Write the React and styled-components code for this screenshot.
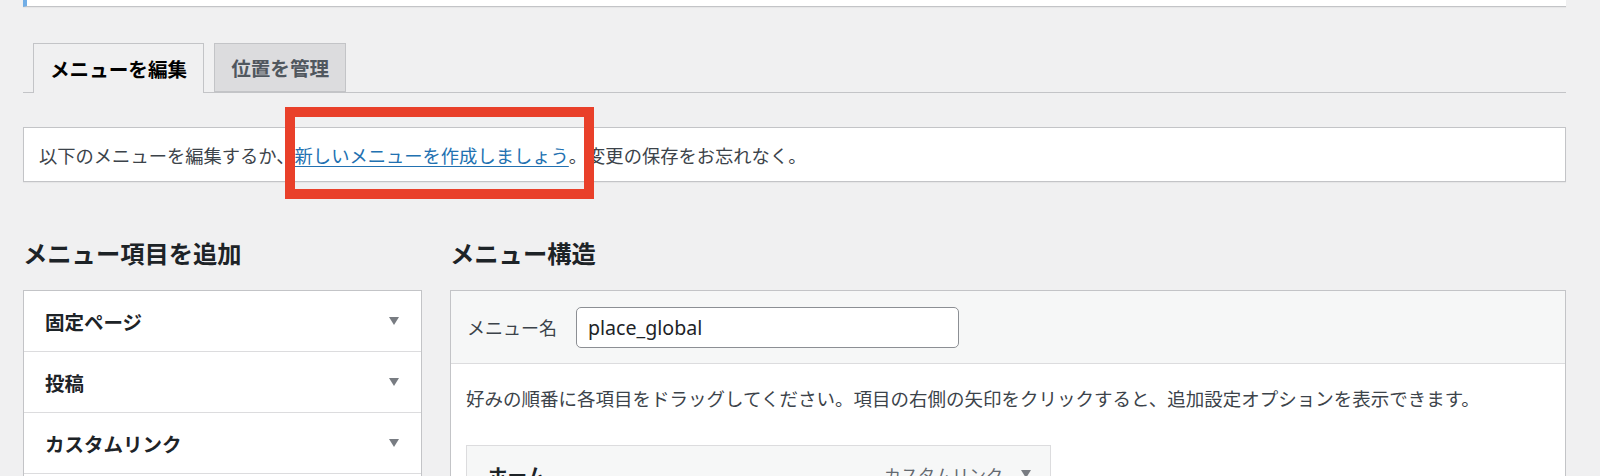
import React from 'react';
import styled, { createGlobalStyle } from 'styled-components';

const COLORS = {
  page: '#f0f0f1',
  border: '#c3c4c7',
  divider: '#dcdcde',
  text: '#1d2327',
  body: '#3c434a',
  muted: '#646970',
  link: '#2271b1',
  arrow: '#787c82',
  annotation: '#e9402a',
};

const FONT = `"Noto Sans", "Noto Sans CJK JP", sans-serif`;

const GlobalStyle = createGlobalStyle`
  html, body {
    margin: 0;
    height: 100%;
    overflow: hidden;
    background: ${COLORS.page};
  }
  body {
    font-family: ${FONT};
    color: ${COLORS.body};
  }
`;

const Wrap = styled.div`
  padding: 0 34px 0 23px;
`;

// tail end of a notice that is scrolled mostly off the top
const TopNotice = styled.div`
  height: 6px;
  background: #fff;
  border-left: 4px solid #72aee6;
  border-bottom: 1px solid ${COLORS.border};
  box-shadow: 0 1px 1px rgba(0, 0, 0, 0.04);
`;

const TabBar = styled.nav`
  display: flex;
  align-items: flex-end;
  gap: 10px;
  margin-top: 36px;
  padding-left: 10px;
  border-bottom: 1px solid ${COLORS.border};
`;

const Tab = styled.a`
  box-sizing: border-box;
  display: flex;
  align-items: center;
  height: ${p => (p.$active ? 50 : 49)}px;
  margin-bottom: ${p => (p.$active ? -1 : 0)}px;
  padding: 0 16px 1px;
  border: 1px solid ${COLORS.border};
  border-bottom: ${p => (p.$active ? 'none' : `1px solid ${COLORS.border}`)};
  background: ${p => (p.$active ? COLORS.page : COLORS.divider)};
  color: ${p => (p.$active ? '#000' : '#50575e')};
  font-size: 19.6px;
  font-weight: 700;
  text-decoration: none;
`;

const Notice = styled.div`
  position: relative;
  box-sizing: border-box;
  display: flex;
  align-items: center;
  height: 55px;
  margin-top: 34px;
  padding: 0 15px;
  background: #fff;
  border: 1px solid ${COLORS.border};
  box-shadow: 0 1px 1px rgba(0, 0, 0, 0.04);
  font-size: 18.3px;
  color: ${COLORS.body};
`;

const Link = styled.a`
  color: ${COLORS.link};
  text-decoration: underline;
  text-underline-offset: 3px;
`;

// red frame drawn over the screenshot to point at the link
const Highlight = styled.span`
  position: absolute;
  left: 261px;
  top: -21px;
  width: 309px;
  height: 92px;
  box-sizing: border-box;
  border: 10px solid ${COLORS.annotation};
  pointer-events: none;
`;

const Columns = styled.div`
  display: flex;
  gap: 28px;
  margin-top: 56px;
`;

const Column = styled.section`
  flex: ${p => (p.$grow ? 1 : '0 0 399px')};
  min-width: 0;
`;

const Heading = styled.h2`
  margin: 0 0 21px;
  font-size: 24.3px;
  line-height: 31px;
  font-weight: 700;
  color: ${COLORS.text};
`;

const Panel = styled.div`
  background: #fff;
  border: 1px solid ${COLORS.border};
  border-bottom: none;
`;

const AccordionRow = styled.div`
  box-sizing: border-box;
  display: flex;
  align-items: center;
  justify-content: space-between;
  height: 61px;
  padding: 0 22px 0 21px;
  border-bottom: 1px solid ${COLORS.divider};
  font-size: 19.5px;
  font-weight: 700;
  color: ${COLORS.text};
`;

const Caret = styled.span`
  width: 0;
  height: 0;
  border-left: 5px solid transparent;
  border-right: 5px solid transparent;
  border-top: 8px solid ${COLORS.arrow};
`;

const NameBar = styled.div`
  box-sizing: border-box;
  display: flex;
  align-items: center;
  gap: 19px;
  height: 73px;
  padding: 0 16px;
  background: #f6f7f7;
  border-bottom: 1px solid ${COLORS.divider};
`;

const Label = styled.label`
  font-size: 18px;
  color: ${COLORS.body};
`;

const NameInput = styled.input`
  box-sizing: border-box;
  width: 383px;
  height: 41px;
  padding: 0 11px;
  border: 1px solid #8c8f94;
  border-radius: 5px;
  background: #fff;
  font-family: ${FONT};
  font-size: 19.6px;
  color: ${COLORS.text};
`;

const PanelBody = styled.div`
  padding: 21px 15px 0 15px;
`;

const Hint = styled.p`
  margin: 0;
  font-size: 18.5px;
  line-height: 27px;
  color: ${COLORS.body};
`;

const MenuItem = styled.div`
  box-sizing: border-box;
  display: flex;
  align-items: center;
  justify-content: space-between;
  width: 585px;
  height: 58px;
  margin-top: 33px;
  padding: 0 19px 0 21px;
  background: #f6f7f7;
  border: 1px solid ${COLORS.divider};
`;

const ItemTitle = styled.span`
  font-size: 19.6px;
  font-weight: 700;
  color: ${COLORS.text};
`;

const ItemMeta = styled.span`
  display: flex;
  align-items: center;
  gap: 18px;
  font-size: 17px;
  color: ${COLORS.muted};
`;

const sections = ['固定ページ', '投稿', 'カスタムリンク', 'カテゴリー'];

const App = () => (
  <>
    <GlobalStyle />
    <Wrap>
      <TopNotice />
      <TabBar>
        <Tab $active>メニューを編集</Tab>
        <Tab>位置を管理</Tab>
      </TabBar>
      <Notice>
        以下のメニューを編集するか、<Link>新しいメニューを作成しましょう</Link>。変更の保存をお忘れなく。
        <Highlight />
      </Notice>
      <Columns>
        <Column>
          <Heading>メニュー項目を追加</Heading>
          <Panel>
            {sections.map(s => (
              <AccordionRow key={s}>
                {s}
                <Caret />
              </AccordionRow>
            ))}
          </Panel>
        </Column>
        <Column $grow>
          <Heading>メニュー構造</Heading>
          <Panel>
            <NameBar>
              <Label>メニュー名</Label>
              <NameInput defaultValue="place_global" readOnly />
            </NameBar>
            <PanelBody>
              <Hint>
                好みの順番に各項目をドラッグしてください。項目の右側の矢印をクリックすると、追加設定オプションを表示できます。
              </Hint>
              <MenuItem>
                <ItemTitle>ホーム</ItemTitle>
                <ItemMeta>
                  カスタムリンク
                  <Caret />
                </ItemMeta>
              </MenuItem>
            </PanelBody>
          </Panel>
        </Column>
      </Columns>
    </Wrap>
  </>
);

export default App;
